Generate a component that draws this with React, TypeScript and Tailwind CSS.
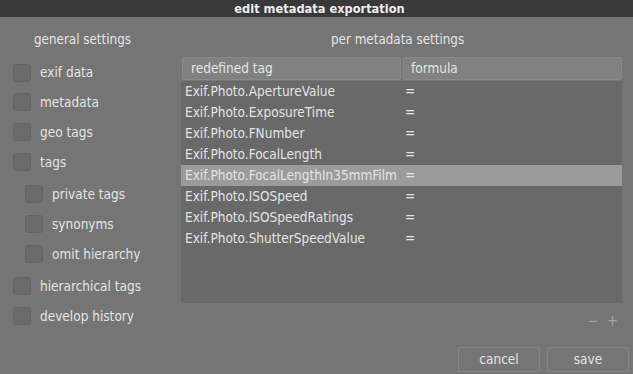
// darktable-style "edit metadata exportation" dialog
import React from 'react';

const general = [
  { label: 'exif data', sub: false },
  { label: 'metadata', sub: false },
  { label: 'geo tags', sub: false },
  { label: 'tags', sub: false },
  { label: 'private tags', sub: true },
  { label: 'synonyms', sub: true },
  { label: 'omit hierarchy', sub: true },
  { label: 'hierarchical tags', sub: false },
  { label: 'develop history', sub: false },
];

const tags = [
  'Exif.Photo.ApertureValue',
  'Exif.Photo.ExposureTime',
  'Exif.Photo.FNumber',
  'Exif.Photo.FocalLength',
  'Exif.Photo.FocalLengthIn35mmFilm',
  'Exif.Photo.ISOSpeed',
  'Exif.Photo.ISOSpeedRatings',
  'Exif.Photo.ShutterSpeedValue',
];

const Check: React.FC<{ label: string; sub: boolean; first?: boolean }> = ({ label, sub, first }) => (
  <div
    className={`flex items-center ${first ? 'h-[31px] pt-[2px]' : 'h-[30px]'} ${sub ? 'pl-[25px]' : 'pl-[13px]'}`}
  >
    <div className="w-[18px] h-[18px] rounded-[3px] bg-[#6b6b6b] border border-[#646464]" />
    <span className="ml-[9px]">{label}</span>
  </div>
);

export default function App() {
  return (
    <div
      className="w-[633px] h-[374px] bg-[#757575] text-[#e4e4e4] text-[13.5px] flex flex-col overflow-hidden"
      style={{ fontFamily: '"DejaVu Sans", sans-serif', fontStretch: 'condensed' }}
    >
      <div className="h-[17px] bg-[#393939] text-[#eeeeee] font-bold text-[12.7px] flex items-center justify-center pl-[6px]">
        edit metadata exportation
      </div>

      <div className="flex flex-1">
        {/* general settings */}
        <div className="w-[181px] flex flex-col">
          <div className="h-[40px] flex items-center pl-[34px] pt-[6px] text-[13.3px]">general settings</div>
          <div className="mt-[-1px]">
            {general.slice(0, 4).map((g, i) => (
              <Check key={g.label} {...g} first={i === 0} />
            ))}
            <div className="pt-[2px]">
              {general.slice(4, 7).map((g) => (
                <Check key={g.label} {...g} />
              ))}
            </div>
            <div className="pt-[2px]">
              {general.slice(7).map((g) => (
                <Check key={g.label} {...g} />
              ))}
            </div>
          </div>
        </div>

        {/* per metadata settings */}
        <div className="flex-1 flex flex-col pr-[11px]">
          <div className="h-[40px] flex items-center pl-[150px] pt-[6px] text-[13.3px]">per metadata settings</div>
          <div className="h-[246px] bg-[#696969] flex flex-col">
            <div className="flex h-[24px] bg-[#757575] gap-[2px] pl-[1px] pb-[1px]">
              <div className="w-[219px] bg-[#818181] border border-[#8a8a8a] rounded-[2px] flex items-center pl-[8px]">
                redefined tag
              </div>
              <div className="flex-1 bg-[#818181] border border-[#8a8a8a] rounded-[2px] flex items-center pl-[7px]">
                formula
              </div>
            </div>
            {tags.map((t, i) => (
              <div key={t} className={`flex h-[21px] items-center ${i === 4 ? 'bg-[#9b9b9b]' : ''}`}>
                <span className="w-[224px] pl-[4px]">{t}</span>
                <span>=</span>
              </div>
            ))}
          </div>
          <div className="flex justify-end items-center gap-[8px] h-[37px] pr-[4px] text-[#a0a0a0] text-[15px]">
            <span>−</span>
            <span>+</span>
          </div>
          <div className="flex justify-end gap-[7px] mr-[-7px] mt-[7px]">
            <div className="w-[82px] h-[25px] border border-[#858585] rounded-[2px] flex items-center justify-center">
              cancel
            </div>
            <div className="w-[82px] h-[25px] border border-[#858585] rounded-[2px] flex items-center justify-center">
              save
            </div>
          </div>
        </div>
      </div>
    </div>
  );
}
